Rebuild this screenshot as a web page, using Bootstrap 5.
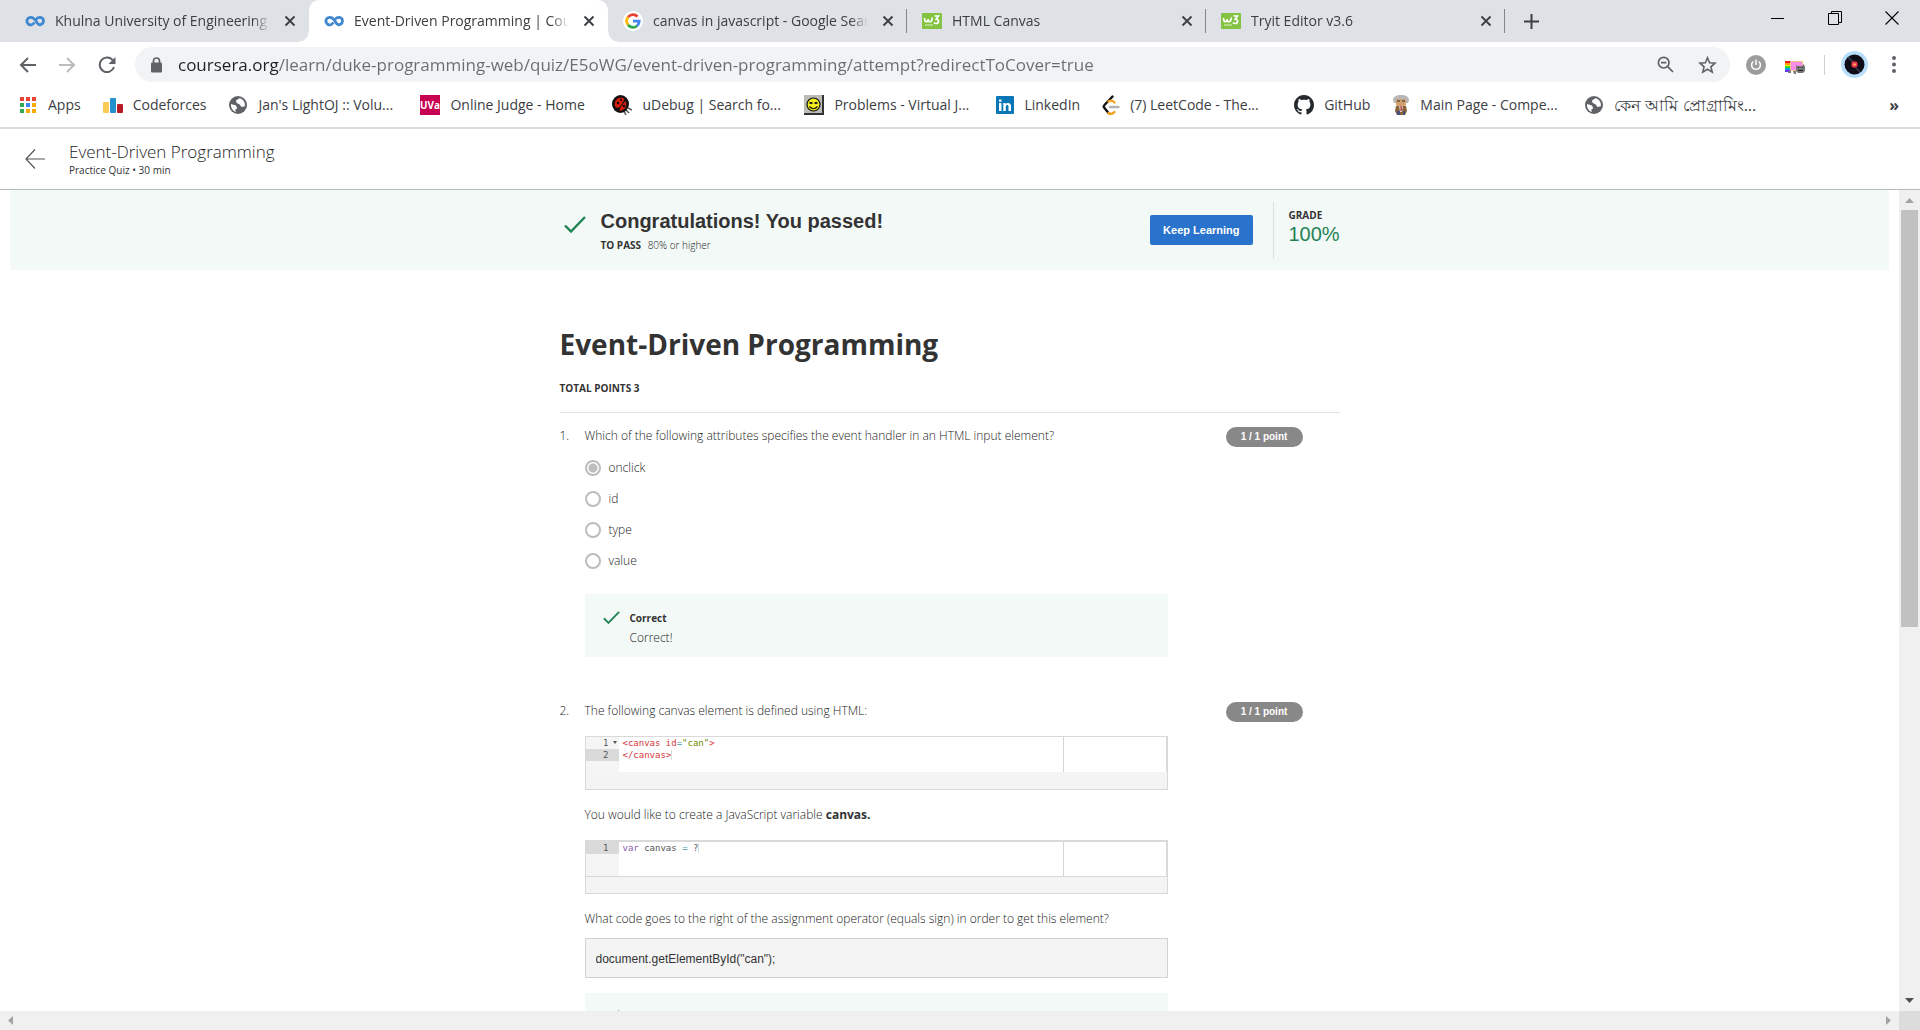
<!DOCTYPE html>
<html lang="en">
<head>
<meta charset="utf-8">
<meta name="viewport" content="width=device-width, initial-scale=1">
<title>Event-Driven Programming | Coursera</title>
<link href="https://cdn.jsdelivr.net/npm/bootstrap@5.3.0/dist/css/bootstrap.min.css" rel="stylesheet">
<style>
body{font-family:"Open Sans","Noto Sans",sans-serif;font-size:12px;line-height:18px;color:#333;background:#fff}
svg{display:block;flex:none}
a{color:inherit;text-decoration:none}
.plain-btn{background:none;border:0;padding:0;color:inherit;display:flex;align-items:center;justify-content:center}
/* browser frame */
.tabstrip{height:42px;background:#dee1e6;padding-left:10px;color:#3c4043;font-size:14px}
.browser-tab{width:299px;padding:0 9px 0 15px;position:relative}
.browser-tab .tab-title{flex:1;min-width:0;overflow:hidden;white-space:nowrap;margin:0 10px;line-height:22px;-webkit-mask-image:linear-gradient(90deg,#000 92%,transparent);mask-image:linear-gradient(90deg,#000 92%,transparent)}
.browser-tab .plain-btn{width:20px;height:20px}
.browser-tab.current{background:#fff;border-radius:10px 10px 0 0}
.browser-tab.current::before,.browser-tab.current::after{content:"";position:absolute;bottom:0;width:10px;height:10px}
.browser-tab.current::before{left:-10px;background:radial-gradient(circle at 0 0,transparent 9px,#fff 10px)}
.browser-tab.current::after{right:-10px;background:radial-gradient(circle at 100% 0,transparent 9px,#fff 10px)}
.tab-rule{border-right:1px solid #80868b;height:24px;position:absolute;right:0;top:9px}
.win-btn{width:57px;height:36px;color:#111}
.new-tab{width:52px}
.toolbar{height:45px;padding:0 0 0 12px;color:#5f6368}
.toolbar .nav-btn{width:30px;height:30px;margin-right:10px}
.pill{height:35px;background:#f1f3f4;border-radius:18px;padding:0 13px;margin-left:3px}
.pill input{border:0;outline:0;padding:0;margin-left:13px;font-size:17px;line-height:24px;height:26px;color:transparent;background:linear-gradient(90deg,#202124 101px,#696d71 101px);-webkit-background-clip:text;background-clip:text}
.profile-rule{width:1px;height:20px;background:#cfd1d4}
.bookmarks{height:40px;padding:0 21px 5px 18px;gap:22px;font-size:14px;line-height:22px;color:#3c4043;white-space:nowrap}
.bookmarks a{display:flex;align-items:center;gap:10px}
.bookmarks .full{width:170px}
.frame-end{border-bottom:2px solid #dadce0}
/* course page */
.quiz-head{height:61px;border-bottom:1px solid #b5b9bb;padding-left:25px}
.quiz-head .head-title{font-size:17px;line-height:22px;font-weight:300;color:#222}
.quiz-head .head-sub{font-size:10px;line-height:14px}
.pane{background:#fff;font-weight:300;color:#222}
.pane-row{min-height:0}
.pane b,.pane strong{font-weight:700;color:#333}
.banner{background:#f3f9f7;height:80px;margin:0 10px}
.measure{width:780px;max-width:100%;margin:0 auto}
.tiny{font-size:10px;line-height:14px}
.banner-tick{margin-top:26px}
.banner-text{padding:18px 0 0 15px}
.pass-title{font:bold 20px/26px "Liberation Sans",Arial,sans-serif;color:#333;margin:0}
.keep-btn{background:#2a73cc;color:#fff;border:0;border-radius:2px;height:30px;padding:0 13px;font:bold 11px/14px "Liberation Sans",Arial,sans-serif}
.grade{border-left:1px solid #dcdfde;height:57px;padding:6px 0 0 15px;width:67px}
.grade-value{font:20px/24px "Liberation Sans",Arial,sans-serif;color:#1f8354}
h1{font-size:28px;line-height:38px;font-weight:700;color:#333;margin:0 0 18px}
.intro{padding:55px 0 17px;border-bottom:1px solid #e1e1e1}
.q-num{width:25px}
.q-body{width:583px}
.points{background:#888;color:#fff;border-radius:10px;width:77px;height:20px;font:bold 10px/20px "Liberation Sans",Arial,sans-serif;text-align:center;margin:0 37px 0 auto}
.question{padding-top:14px;margin-bottom:31px}
.choices{display:flex;flex-direction:column;gap:13px;margin-top:14px}
.choices label{display:flex;align-items:center;height:18px}
.choices input{appearance:none;width:16px;height:16px;border:2px solid #bdbdbd;border-radius:50%;margin:0 8px 0 0;background:#fff}
.choices input:checked{background:radial-gradient(circle,#bdbdbd 4px,#fff 5px)}
.feedback{background:#f3f9f7;padding:15px 15px 10px 18px;margin-top:15px;display:flex;gap:10px}
.choices+.feedback{margin-top:24px}
.feedback svg{margin-top:2px}
.feedback strong{display:block;font-size:10px;margin-bottom:2px}
.editor{border:1px solid #d9d9d9;background:#f4f4f4;height:54px}
.editor .lines{height:35px;background:#fff;border-right:1px solid #d9d9d9;font:9px/12px "DejaVu Sans Mono","Liberation Mono",monospace;color:#555}
.editor .gutter{width:33px;background:#f5f5f5}
.editor .gutter div{padding-right:1px;height:12px;display:flex;justify-content:flex-end;gap:3px;align-items:center}
.editor .gutter span{width:6px}
.editor .gutter .cur{background:#dadada}
.editor .src{padding-left:4px;width:445px;border-right:1px solid #cfd7dc}
.editor.ruled .lines{height:36px;border-top:1px solid #d9d9d9;border-bottom:1px solid #d9d9d9}
.tg{color:#d6373b}.st{color:#718c00}.op{color:#3e999f}.kw{color:#8959a8}
.caret{border-right:1px solid #ddd}
.prompt{margin:16px 0 10px}
.answer{display:block;width:100%;height:40px;border:1px solid #d2d2d2;background:#f4f4f4;border-radius:0;padding:2px 10px 0;font:12px/18px "Liberation Sans",Arial,sans-serif;color:#333;outline:0}
/* scroll tracks */
.vtrack{width:21px;background:#f0f0f0;padding:8px 2px}
.vthumb{height:417px;background:#c1c1c1;margin-top:7px}
.htrack{height:19px;background:#f0f0f0;padding-left:8px}
.corner{width:21px;background:#dcdcdc;margin-left:8px}
</style>
</head>
<body class="vh-100 overflow-hidden d-flex flex-column">
<svg width="0" height="0" class="position-absolute" aria-hidden="true">
<symbol id="cx" viewBox="0 0 20 20"><path d="M13 7.200c2.500-2 5.500-.2 5.500 2.800s-3.500 5-5.800 2.600C11 10.500 9.800 6.300 5.800 6.300a3.800 3.800 0 1 0 1.400 7.300" fill="none" stroke="#3f87cf" stroke-width="2.800"/><path d="M7.200 13.600c1-.4 1.600-1.200 2.200-2.200M11 8.600c.6-1 1.400-1.800 2.400-2.100" fill="none" stroke="#3f87cf" stroke-width="2.600"/></symbol>
<symbol id="w3" viewBox="0 0 20 20"><rect y="2" width="20" height="16" rx="1" fill="#84c341"/><path d="M2.500 7c0 5 3.500 4.500 3.700 1 0 4 4 4 4-1.500M12.500 5h4l-2.300 3.200c3.500 0 3 4.300-.2 4.300-1 0-1.600-.4-2-1" fill="none" stroke="#fff" stroke-width="1.600"/><path d="M3 14h8" stroke="#c3e2a0" stroke-width="1.400"/></symbol>
<symbol id="xx" viewBox="0 0 12 12"><path d="M1.500 1.500l9 9m0-9l-9 9" stroke="#3c4043" stroke-width="1.900"/></symbol>
<symbol id="globe" viewBox="0 0 20 20"><circle cx="10" cy="10" r="9" fill="#5f6368"/><path d="M11.500 3.200L8 5.500l.5 2.300 3.200 1.700 1.800 2.500 3.300-.8c.8-4-2-7.400-5.300-8zM3 9l5 1.500 1.200 2.700-2 1.500.8 2.200C4.800 16.200 2.700 12.800 3 9z" fill="#fff"/></symbol>
<symbol id="tick" viewBox="0 0 22 17"><path d="M1 9.500l6 6L21 1" fill="none" stroke="#1f8354" stroke-width="2.400"/></symbol>
</svg>

<header class="flex-shrink-0">
<nav class="tabstrip d-flex" aria-label="Tabs">
  <div class="browser-tab d-flex align-items-center"><svg width="20" height="20"><use href="#cx"/></svg><a href="#" class="tab-title">Khulna University of Engineering</a><button class="plain-btn" aria-label="Close"><svg width="12" height="12"><use href="#xx"/></svg></button></div>
  <div class="browser-tab current d-flex align-items-center"><svg width="20" height="20"><use href="#cx"/></svg><a href="#" class="tab-title">Event-Driven Programming | Coursera</a><button class="plain-btn" aria-label="Close"><svg width="12" height="12"><use href="#xx"/></svg></button></div>
  <div class="browser-tab d-flex align-items-center"><svg width="20" height="20" viewBox="0 0 20 20"><circle cx="10" cy="10" r="10" fill="#fff"/><g fill="none" stroke-width="2.800"><path d="M5 6.200A6.300 6.300 0 0 1 14.600 5.600" stroke="#ea4335"/><path d="M5 13.800A6.300 6.300 0 0 1 5 6.200" stroke="#fbbc05"/><path d="M14.200 14.700A6.300 6.300 0 0 1 5 13.800" stroke="#34a853"/><path d="M10 10.200h6.200a6.300 6.300 0 0 1-2 4.500" stroke="#4285f4"/></g></svg><a href="#" class="tab-title">canvas in javascript - Google Search</a><button class="plain-btn" aria-label="Close"><svg width="12" height="12"><use href="#xx"/></svg></button><i class="tab-rule"></i></div>
  <div class="browser-tab d-flex align-items-center"><svg width="20" height="20"><use href="#w3"/></svg><a href="#" class="tab-title">HTML Canvas</a><button class="plain-btn" aria-label="Close"><svg width="12" height="12"><use href="#xx"/></svg></button><i class="tab-rule"></i></div>
  <div class="browser-tab d-flex align-items-center"><svg width="20" height="20"><use href="#w3"/></svg><a href="#" class="tab-title">Tryit Editor v3.6</a><button class="plain-btn" aria-label="Close"><svg width="12" height="12"><use href="#xx"/></svg></button><i class="tab-rule"></i></div>
  <button class="plain-btn new-tab" aria-label="New tab"><svg width="15" height="15" viewBox="0 0 15 15"><path d="M7.500 0v15M0 7.500h15" stroke="#3c4043" stroke-width="2"/></svg></button>
  <div class="d-flex ms-auto">
    <button class="plain-btn win-btn" aria-label="Minimize"><svg width="13" height="13"><path d="M0 6.500h13" stroke="#000"/></svg></button>
    <button class="plain-btn win-btn" aria-label="Restore"><svg width="14" height="14" fill="none" stroke="#000"><path d="M.5 2.500h10v11H.5zM3.500 2.500v-2h10v11h-3"/></svg></button>
    <button class="plain-btn win-btn" aria-label="Close window"><svg width="14" height="14"><path d="M.5.5l13 13m0-13l-13 13" stroke="#000" stroke-width="1.100"/></svg></button>
  </div>
</nav>

<div class="toolbar d-flex align-items-center">
  <button class="plain-btn nav-btn" aria-label="Back"><svg width="17" height="16" viewBox="0 0 17 16" fill="none" stroke="#5f6368" stroke-width="2"><path d="M17 8H2M9 1L2 8l7 7"/></svg></button>
  <button class="plain-btn nav-btn" aria-label="Forward"><svg width="17" height="16" viewBox="0 0 17 16" fill="none" stroke="#babcbe" stroke-width="2"><path d="M0 8h15M8 1l7 7-7 7"/></svg></button>
  <button class="plain-btn nav-btn" aria-label="Reload"><svg width="18" height="18" viewBox="0 0 18 18"><path d="M15 4.500A7.300 7.300 0 1 0 16 11" fill="none" stroke="#5f6368" stroke-width="2"/><path d="M17.500 1v7h-7z" fill="#5f6368"/></svg></button>
  <div class="pill d-flex align-items-center flex-grow-1">
    <svg width="17" height="16" viewBox="0 0 17 16"><path d="M5.500 6V4a3 3 0 0 1 6 0v2" fill="none" stroke="#5f6368" stroke-width="1.700"/><rect x="3" y="5.500" width="11" height="10" rx="1.200" fill="#5f6368"/></svg>
    <input class="flex-grow-1" type="text" aria-label="Address" value="coursera.org/learn/duke-programming-web/quiz/E5oWG/event-driven-programming/attempt?redirectToCover=true">
    <svg class="me-4" width="17" height="17" viewBox="0 0 17 17" fill="none" stroke="#5f6368" stroke-width="1.700"><circle cx="6.700" cy="6.700" r="5.300"/><path d="M10.700 10.700l5.300 5.300M4 6.700h5.400"/></svg>
    <svg width="19" height="18" viewBox="0 0 19 18"><path d="M9.500 1.800l2.100 5 5.400.4-4.100 3.600 1.300 5.300-4.700-2.900-4.700 2.900 1.300-5.300L2 7.200l5.400-.4z" fill="none" stroke="#5f6368" stroke-width="1.600"/></svg>
  </div>
  <div class="d-flex align-items-center ps-3 pe-4">
    <svg width="20" height="20" viewBox="0 0 20 20"><circle cx="10" cy="10" r="10" fill="#9c9c9c"/><path d="M7.300 6.500a4.400 4.400 0 1 0 5.400 0M10 4.500V10" fill="none" stroke="#fff" stroke-width="1.500"/></svg>
    <svg class="ms-3 me-3 mt-1" width="26" height="14" viewBox="0 0 26 14"><path fill="#e81c1c" d="M3 1h6v2H3z"/><path fill="#ff9a00" d="M3 3h6v2H3z"/><path fill="#f5ee1e" d="M3 5h6v1H3z"/><path fill="#3cdb21" d="M3 6h6v2H3z"/><path fill="#0a9cf0" d="M3 8h6v2H3z"/><path fill="#6633ff" d="M3 10h6v2H3z"/><rect x="8" y="1" width="13" height="10" rx="1" fill="#f0c288"/><path fill="#f78fe8" d="M9 2h11v8H9z"/><path d="M14 5l2 1h4l2-2 1 3v4l-2 2h-5l-2-2zM6 11h3v2H6zM11 11h3v3h-2z" fill="#777"/><path d="M16 7h1v1h-1zM20 7h1v1h-1zM16 10h5v1h-5z" fill="#222"/></svg>
    <span class="profile-rule"></span>
    <svg class="ms-3" width="27" height="27" viewBox="0 0 27 27"><circle cx="13.500" cy="13.500" r="13.500" fill="#b8defb"/><circle cx="13.500" cy="13.500" r="10" fill="#0e0d18"/><path d="M7 6l5 5M15 17l4 4" stroke="#35404f" stroke-width="1.500"/><circle cx="13.500" cy="13.500" r="3.200" fill="#ed2f4b"/><circle cx="13.500" cy="13.500" r="1.200" fill="#ffc35a"/></svg>
    <button class="plain-btn ms-4" aria-label="Menu"><svg width="4" height="17" fill="#5f6368"><circle cx="2" cy="2" r="2"/><circle cx="2" cy="8.500" r="2"/><circle cx="2" cy="15" r="2"/></svg></button>
  </div>
</div>

<nav class="bookmarks d-flex align-items-center" aria-label="Bookmarks">
  <a href="#"><svg width="20" height="20" viewBox="0 0 20 20"><path fill="#ea4335" d="M2 2h4v4H2zM8 2h4v4H8zM14 2h4v4h-4z"/><path fill="#34a853" d="M2 8h4v4H2zM2 14h4v4H2z"/><path fill="#4285f4" d="M8 8h4v4H8z"/><path fill="#fbaa05" d="M14 8h4v4h-4zM8 14h4v4H8zM14 14h4v4h-4z"/></svg>Apps</a>
  <a href="#"><svg width="20" height="20" viewBox="0 0 20 20"><rect y="7" width="6" height="11" rx="1" fill="#fbcb54"/><rect x="7" y="3" width="6" height="15" rx="1" fill="#2490cc"/><rect x="14" y="9" width="6" height="9" rx="1" fill="#b71c26"/></svg>Codeforces</a>
  <a href="#" class="full"><svg width="20" height="20"><use href="#globe"/></svg>Jan's LightOJ :: Volu...</a>
  <a href="#" class="full"><svg width="20" height="20" viewBox="0 0 20 20"><path fill="#c70052" d="M0 0h20v20H0z"/><text x="10" y="14" fill="#fff" font-size="10" font-weight="700" text-anchor="middle">UVa</text></svg>Online Judge - Home</a>
  <a href="#" class="full"><svg width="20" height="20" viewBox="0 0 20 20"><path d="M13 14l4 4M16 13l4 2M12 16l2 4" stroke="#555" stroke-width="1.500"/><ellipse cx="8.500" cy="9" rx="8.500" ry="9" fill="#141010"/><path d="M3.500 6c2-4 7-4 9-2l-2 4-4 5-3-1c-1-2-1-4 0-6zM13.500 6c2 5 0 9-6 10l1-4z" fill="#d51d0c"/><circle cx="6" cy="8" r="1.200"/><circle cx="9" cy="5" r="1"/><circle cx="12" cy="11" r="1.200"/></svg>uDebug | Search fo...</a>
  <a href="#" class="full"><svg width="20" height="20" viewBox="0 0 20 20"><path fill="#333" d="M0 0h20v20H0z"/><path fill="#bcbcb4" d="M0 0h18v18H0z"/><circle cx="9.500" cy="9.500" r="6.500" fill="#f5ec1b" stroke="#111" stroke-width="1.200"/><path d="M5.500 7h3v2h-3zM10.500 7h3v2h-3z" fill="#222"/><path d="M5.500 11.500q4 4.500 8 0" fill="none" stroke="#111" stroke-width="1.200"/></svg>Problems - Virtual J...</a>
  <a href="#"><svg width="18" height="20" viewBox="0 0 18 20"><rect y="1" width="18" height="18" rx="1" fill="#0a76b5"/><path d="M3 8h2.500v8H3zM3 4.500h2.500v2.200H3zM7.300 8h2.400v1.200c1.400-2.200 5.300-1.700 5.300 2V16h-2.500v-4.300c0-2.200-2.700-2.200-2.700 0V16H7.300z" fill="#fff"/></svg>LinkedIn</a>
  <a href="#" class="full"><svg width="18" height="20" viewBox="0 0 18 20" fill="none" stroke-width="2.400" stroke-linecap="round"><path d="M10.500 1.500L2.500 10c-1 1-1 2 0 3l4 5" stroke="#111"/><path d="M6.500 6.500c2-1.500 4-1 6 1M6.500 18c2 1.500 4 1 6-1" stroke="#f8a11b"/><path d="M8 12h8.500" stroke="#b3b3b3"/></svg>(7) LeetCode - The...</a>
  <a href="#"><svg width="20" height="20" viewBox="0 0 16 16"><path fill="#24292e" d="M8 0C3.580 0 0 3.580 0 8c0 3.540 2.290 6.530 5.470 7.590.4.070.55-.17.55-.38 0-.19-.01-.82-.01-1.490-2.010.37-2.530-.49-2.690-.94-.09-.23-.48-.94-.82-1.130-.28-.15-.68-.52-.01-.53.63-.01 1.080.58 1.230.82.72 1.210 1.870.87 2.330.66.070-.52.28-.87.51-1.070-1.780-.2-3.640-.89-3.640-3.950 0-.87.31-1.590.82-2.150-.08-.2-.36-1.020.08-2.120 0 0 .67-.21 2.200.82.64-.18 1.320-.27 2-.27s1.360.09 2 .27c1.530-1.040 2.200-.82 2.200-.82.44 1.100.16 1.920.08 2.120.51.56.82 1.270.82 2.150 0 3.070-1.870 3.750-3.650 3.950.29.25.54.73.54 1.480 0 1.070-.01 1.930-.01 2.200 0 .21.15.46.55.38A8.010 8.010 0 0 0 16 8c0-4.420-3.580-8-8-8z"/></svg>GitHub</a>
  <a href="#" class="full"><svg width="18" height="20" viewBox="0 0 18 20"><path d="M1 5c0-3 3-5 8-5s8 2 8 5l-1 3H2z" fill="#b7b7b7"/><path d="M4 4h10v6l-3 2H7l-3-2z" fill="#d5a06e"/><path d="M5 6h3M10 6h3" stroke="#555" stroke-width="1.500"/><path d="M4 11h10l1 5-2 4H5l-2-4z" fill="#8c6239"/><path d="M7 11h4l-1 6H8z" fill="#d8d4ce"/><path d="M8.500 11h1.300v5H8.500z" fill="#b32d2d"/><path d="M5 16h3v4H5zM11 16h2v4h-2z" fill="#42507e"/></svg>Main Page - Compe...</a>
  <a href="#" class="full"><svg width="20" height="20"><use href="#globe"/></svg><span class="fs-6">কেন আমি প্রোগ্রামিং...</span></a>
  <button class="plain-btn ms-auto fs-6 fw-bold" aria-label="More bookmarks">»</button>
</nav>
<div class="frame-end"></div>
</header>

<div class="quiz-head d-flex align-items-center flex-shrink-0">
  <a href="#" aria-label="Back"><svg width="20" height="20" viewBox="0 0 20 20" fill="none" stroke="#555" stroke-width="1.200"><path d="M20 10H1M10 .5L1 10l9 9.500"/></svg></a>
  <div class="ms-4"><div class="head-title">Event-Driven Programming</div><div class="head-sub">Practice Quiz • 30 min</div></div>
</div>

<div class="pane-row d-flex flex-grow-1 overflow-hidden">
<main class="pane flex-grow-1 overflow-hidden">
  <section class="banner"><div class="measure d-flex h-100">
    <svg class="ms-1 banner-tick" width="22" height="17"><use href="#tick"/></svg>
    <div class="banner-text flex-grow-1"><h2 class="pass-title">Congratulations! You passed!</h2><div class="tiny mt-1"><b class="me-1">TO PASS</b> 80% or higher</div></div>
    <div class="d-flex align-items-center"><button class="keep-btn me-3">Keep Learning</button><div class="grade ms-1"><div class="tiny"><b>GRADE</b></div><div class="grade-value">100%</div></div></div>
  </div></section>
  <div class="measure">
    <div class="intro"><h1>Event-Driven Programming</h1><div class="tiny"><b>TOTAL POINTS 3</b></div></div>

    <section class="question d-flex align-items-start">
      <div class="q-num">1.</div>
      <div class="q-body">
        <div>Which of the following attributes specifies the event handler in an HTML input element?</div>
        <div class="choices">
          <label><input type="radio" name="q1" checked>onclick</label>
          <label><input type="radio" name="q1">id</label>
          <label><input type="radio" name="q1">type</label>
          <label><input type="radio" name="q1">value</label>
        </div>
        <div class="feedback"><svg width="17" height="13"><use href="#tick"/></svg><div><strong>Correct</strong>Correct!</div></div>
      </div>
      <span class="points">1 / 1 point</span>
    </section>

    <section class="question d-flex align-items-start">
      <div class="q-num">2.</div>
      <div class="q-body">
        <div>The following canvas element is defined using HTML:</div>
        <div class="editor mt-3"><div class="lines d-flex">
          <div class="gutter"><div>1<svg width="6" height="4"><path d="M1 0h4L3 3z" fill="#555"/></svg></div><div class="cur">2<span></span></div></div>
          <div class="src"><div><span class="tg">&lt;canvas id</span><span class="op">=</span><span class="st">"can"</span><span class="tg">&gt;</span></div><div><span class="tg caret">&lt;/canvas&gt;</span></div></div>
        </div></div>
        <div class="mt-3">You would like to create a JavaScript variable <b>canvas.</b></div>
        <div class="editor ruled mt-3"><div class="lines d-flex">
          <div class="gutter"><div class="cur">1<span></span></div></div>
          <div class="src"><span class="kw">var</span> canvas <span class="op">=</span> <span class="caret">?</span></div>
        </div></div>
        <label class="d-block prompt" for="ans">What code goes to the right of the assignment operator (equals sign) in order to get this element?</label>
        <input class="answer" id="ans" type="text" readonly value='document.getElementById("can");'>
        <div class="feedback"><svg width="17" height="13"><use href="#tick"/></svg><div><strong>Correct</strong></div></div>
      </div>
      <span class="points">1 / 1 point</span>
    </section>
  </div>
</main>
<div class="vtrack d-flex flex-column flex-shrink-0">
  <svg class="mx-auto" width="9" height="5"><path d="M0 5h9L4.500 0z" fill="#a3a3a3"/></svg>
  <div class="vthumb"></div>
  <svg class="mx-auto mt-auto" width="9" height="5"><path d="M0 0h9L4.500 5z" fill="#505050"/></svg>
</div>
</div>
<div class="htrack d-flex align-items-center flex-shrink-0">
  <svg width="5" height="9"><path d="M5 0v9L0 4.500z" fill="#a3a3a3"/></svg>
  <svg class="ms-auto" width="5" height="9"><path d="M0 0v9l5-4.500z" fill="#a3a3a3"/></svg>
  <div class="corner align-self-stretch"></div>
</div>
<script src="https://cdn.jsdelivr.net/npm/bootstrap@5.3.0/dist/js/bootstrap.bundle.min.js"></script>
</body>
</html>
